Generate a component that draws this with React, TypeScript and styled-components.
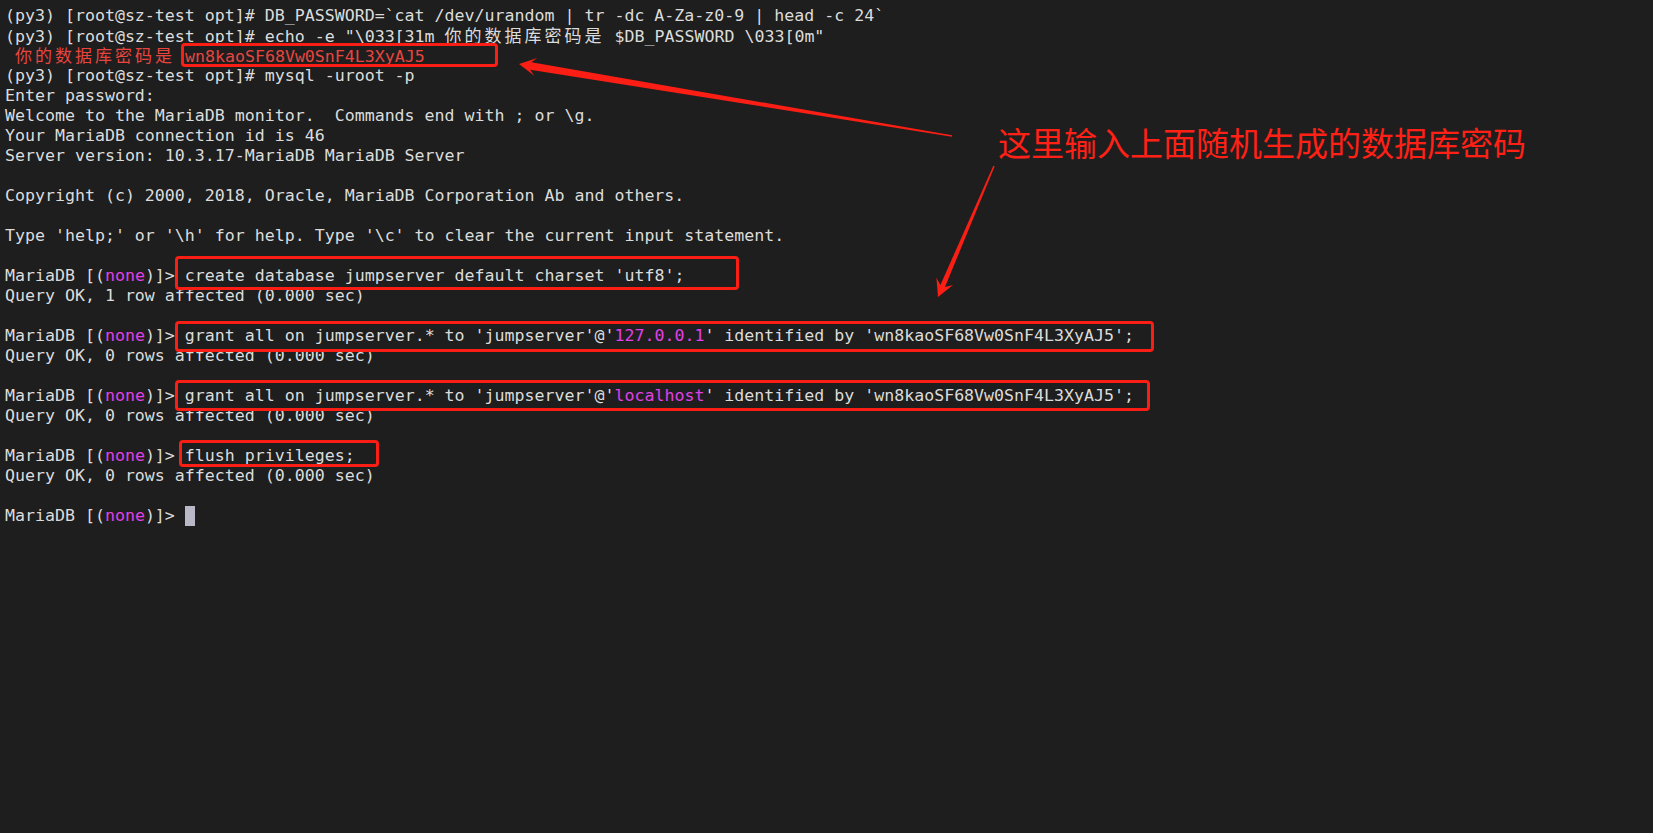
import React from 'react';
import styled, { createGlobalStyle } from 'styled-components';

const GlobalStyle = createGlobalStyle`
	html,
	body {
		margin: 0;
		padding: 0;
		background-color: #1e1e1e;
	}
`;

const Terminal = styled.div`
	position: relative;
	box-sizing: border-box;
	width: 100%;
	min-height: 100vh;
	padding: 6px 0 0 5px;
	background-color: #1e1e1e;
	color: #dcdcdc;
	font-family: 'DejaVu Sans Mono', 'Liberation Mono', monospace;
	font-size: 16.6px;
	overflow: hidden;
`;
const Row = styled.div`
	height: 20px;
	line-height: 20px;
	white-space: pre;
`;
const Tone = styled.span<{ $tone: 'magenta' | 'red' }>`
	color: ${(p) => (p.$tone === 'magenta' ? '#e040e6' : '#e8453f')};
`;
// CJK glyphs take two terminal cells (20px)
const Wide = styled.span`
	font-family: 'Noto Sans CJK SC', sans-serif;
	font-size: 17px;
	line-height: 1;
	letter-spacing: 3px;
`;
const Cursor = styled.span`
	display: inline-block;
	width: 10px;
	height: 20px;
	vertical-align: top;
	background-color: #b8b8c6;
`;

// red marks drawn over the screenshot
const Box = styled.div<{ $x: number; $y: number; $w: number; $h: number }>`
	position: absolute;
	left: ${(p) => p.$x}px;
	top: ${(p) => p.$y}px;
	width: ${(p) => p.$w}px;
	height: ${(p) => p.$h}px;
	box-sizing: border-box;
	border: 3px solid #fa1e14;
	border-radius: 4px;
`;
const Note = styled.div`
	position: absolute;
	left: 998px;
	top: 126px;
	font-family: 'Noto Sans CJK SC', sans-serif;
	font-size: 33px;
	line-height: 1;
	color: #ff2016;
	white-space: nowrap;
`;
const Overlay = styled.svg`
	position: absolute;
	left: 0;
	top: 0;
	pointer-events: none;
`;

type Pt = [number, number];

const arrowPoints = (tail: Pt, tip: Pt, w0: number, w1: number, headLen: number, headHalf: number) => {
	const dx = tip[0] - tail[0];
	const dy = tip[1] - tail[1];
	const len = Math.hypot(dx, dy);
	const ux = dx / len;
	const uy = dy / len;
	const nx = -uy;
	const ny = ux;
	const base: Pt = [tip[0] - ux * headLen, tip[1] - uy * headLen];
	const neck: Pt = [tip[0] - ux * headLen * 0.7, tip[1] - uy * headLen * 0.7];
	const pts: Pt[] = [
		[tail[0] + (nx * w0) / 2, tail[1] + (ny * w0) / 2],
		[neck[0] + (nx * w1) / 2, neck[1] + (ny * w1) / 2],
		[base[0] + nx * headHalf, base[1] + ny * headHalf],
		tip,
		[base[0] - nx * headHalf, base[1] - ny * headHalf],
		[neck[0] - (nx * w1) / 2, neck[1] - (ny * w1) / 2],
		[tail[0] - (nx * w0) / 2, tail[1] - (ny * w0) / 2],
	];
	return pts.map((p) => `${p[0].toFixed(1)},${p[1].toFixed(1)}`).join(' ');
};

const Prompt = () => <>(py3) [root@sz-test opt]# </>;
const Maria = () => (
	<>
		MariaDB [(<Tone $tone="magenta">none</Tone>)]&gt;{' '}
	</>
);

const App = () => {
	return (
		<>
			<GlobalStyle />
			<Terminal>
				<Row>
					<Prompt />
					DB_PASSWORD=`cat /dev/urandom | tr -dc A-Za-z0-9 | head -c 24`
				</Row>
				<Row>
					<Prompt />
					echo -e "\033[31m <Wide>你的数据库密码是</Wide> $DB_PASSWORD \033[0m"
				</Row>
				<Row>
					<Tone $tone="red">
						{' '}
						<Wide>你的数据库密码是</Wide> wn8kaoSF68Vw0SnF4L3XyAJ5
					</Tone>
				</Row>
				<Row>
					<Prompt />
					mysql -uroot -p
				</Row>
				<Row>Enter password:</Row>
				<Row>Welcome to the MariaDB monitor.  Commands end with ; or \g.</Row>
				<Row>Your MariaDB connection id is 46</Row>
				<Row>Server version: 10.3.17-MariaDB MariaDB Server</Row>
				<Row />
				<Row>Copyright (c) 2000, 2018, Oracle, MariaDB Corporation Ab and others.</Row>
				<Row />
				<Row>Type 'help;' or '\h' for help. Type '\c' to clear the current input statement.</Row>
				<Row />
				<Row>
					<Maria />
					create database jumpserver default charset 'utf8';
				</Row>
				<Row>Query OK, 1 row affected (0.000 sec)</Row>
				<Row />
				<Row>
					<Maria />
					grant all on jumpserver.* to 'jumpserver'@'<Tone $tone="magenta">127.0.0.1</Tone>' identified by
					'wn8kaoSF68Vw0SnF4L3XyAJ5';
				</Row>
				<Row>Query OK, 0 rows affected (0.000 sec)</Row>
				<Row />
				<Row>
					<Maria />
					grant all on jumpserver.* to 'jumpserver'@'<Tone $tone="magenta">localhost</Tone>' identified by
					'wn8kaoSF68Vw0SnF4L3XyAJ5';
				</Row>
				<Row>Query OK, 0 rows affected (0.000 sec)</Row>
				<Row />
				<Row>
					<Maria />
					flush privileges;
				</Row>
				<Row>Query OK, 0 rows affected (0.000 sec)</Row>
				<Row />
				<Row>
					<Maria />
					<Cursor />
				</Row>

				<Box $x={181} $y={43} $w={317} $h={24} />
				<Box $x={175} $y={256} $w={564} $h={34} />
				<Box $x={175} $y={321} $w={979} $h={31} />
				<Box $x={175} $y={380} $w={975} $h={31} />
				<Box $x={179} $y={440} $w={200} $h={27} />

				<Note>这里输入上面随机生成的数据库密码</Note>
				<Overlay width="1653" height="833" viewBox="0 0 1653 833">
					<polygon points={arrowPoints([952, 136], [519, 64], 1.5, 7.5, 17, 9)} fill="#fa1e14" />
					<polygon points={arrowPoints([994, 166], [938, 297], 1.5, 5, 17, 9)} fill="#fa1e14" />
				</Overlay>
			</Terminal>
		</>
	);
};

export default App;
